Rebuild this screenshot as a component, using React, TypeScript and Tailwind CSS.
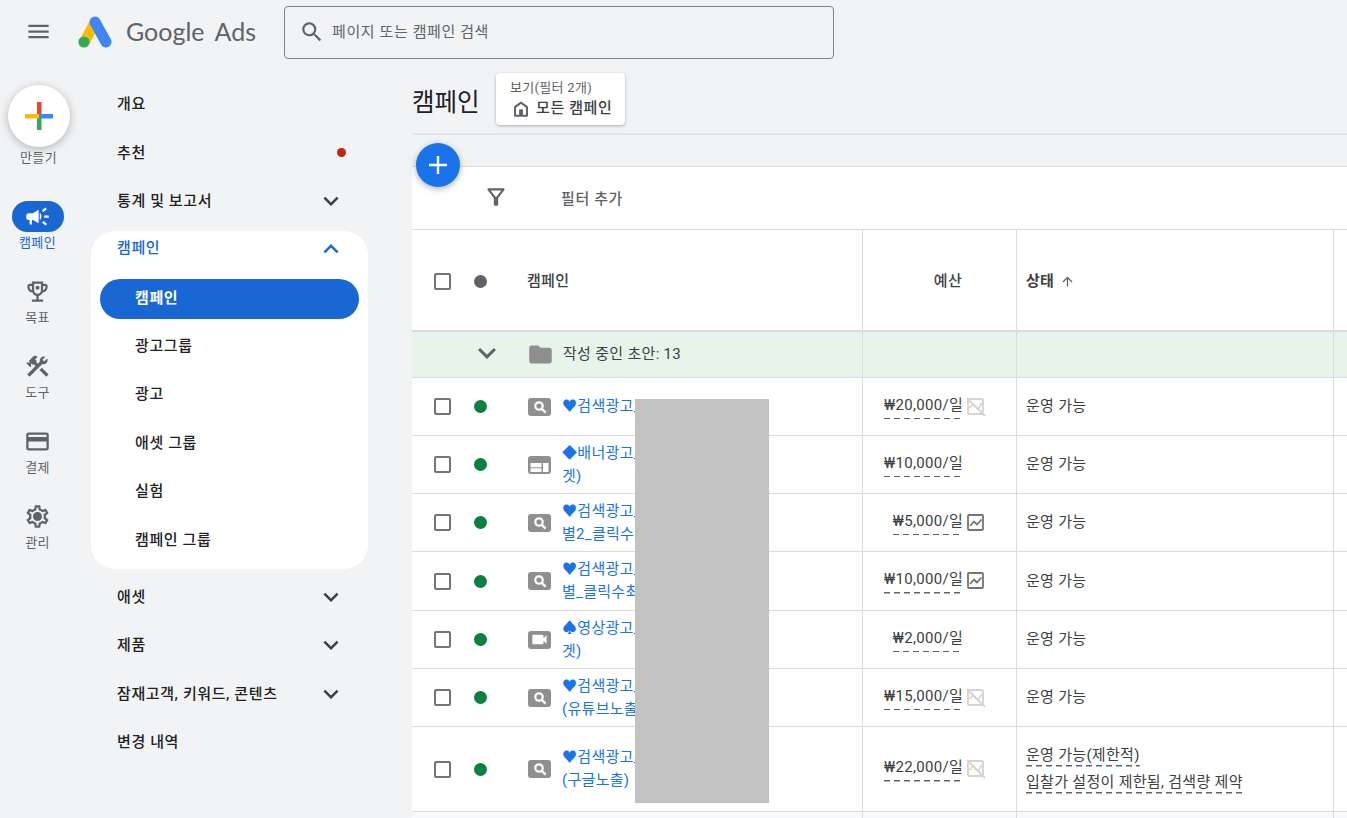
import type { ReactNode } from "react";
import {
  MdArrowUpward,
  MdCampaign,
  MdConstruction,
  MdCreditCard,
  MdExpandLess,
  MdExpandMore,
  MdFolder,
  MdMenu,
  MdOutlineFilterAlt,
  MdOutlineSettings,
  MdSearch,
  MdVideocam,
} from "react-icons/md";

const FONT = "font-['Roboto','Noto_Sans_CJK_KR',sans-serif]";
const NAV_TEXT = "text-[15px] tracking-[0.6px]";
const CELL_TEXT = "text-[15px] tracking-[0.3px]";
const RAIL_TEXT = "text-[13px] tracking-[0.3px]";

function AdsLogo() {
  return (
    <svg width="34" height="32" viewBox="0 0 34 32">
      <path d="M7 25 L16 8" stroke="#fbbc04" strokeWidth="10.5" strokeLinecap="butt" />
      <path d="M17 6 L28 26" stroke="#4285f4" strokeWidth="11" strokeLinecap="round" />
      <circle cx="6" cy="26" r="5.6" fill="#34a853" />
    </svg>
  );
}

function ColorPlus() {
  return (
    <svg width="28" height="28" viewBox="0 0 28 28">
      <rect x="12" y="0" width="4.5" height="14" fill="#ea4335" />
      <rect x="14" y="12" width="14" height="4.5" fill="#4285f4" />
      <rect x="12" y="14" width="4.5" height="14" fill="#34a853" />
      <rect x="0" y="12" width="14" height="4.5" fill="#fbbc04" />
    </svg>
  );
}

function TrophyIcon() {
  return (
    <svg width="27" height="27" viewBox="0 0 24 24" fill="currentColor">
      <path d="M19 5h-2V3H7v2H5c-1.1 0-2 .9-2 2v1c0 2.55 1.92 4.63 4.39 4.94.63 1.5 1.98 2.63 3.61 2.96V19H7v2h10v-2h-4v-3.1c1.63-.33 2.98-1.46 3.61-2.96C19.08 12.63 21 10.55 21 8V7c0-1.1-.9-2-2-2zM5 8V7h2v3.82C5.84 10.4 5 9.3 5 8zm7 6c-1.65 0-3-1.35-3-3V5h6v6c0 1.65-1.35 3-3 3zm7-6c0 1.3-.84 2.4-2 2.82V7h2v1z" />
      <circle cx="12" cy="8.6" r="1.8" />
    </svg>
  );
}

function GearIcon() {
  return (
    <span className="relative block h-[27px] w-[27px]">
      <MdOutlineSettings className="h-[27px] w-[27px]" />
      <span className="absolute left-[10px] top-[10px] h-[7px] w-[7px] rounded-full bg-[#5f6368]" />
    </span>
  );
}

function HomeIcon() {
  return (
    <svg width="18" height="18" viewBox="0 0 24 24" className="shrink-0">
      <path d="M12 3.5 4 9.5V21h16V9.5z" fill="none" stroke="#5f6368" strokeWidth="2.6" strokeLinejoin="round" />
      <rect x="9.5" y="12.5" width="5" height="8" fill="#5f6368" />
    </svg>
  );
}

function RailItem({ icon, label }: { icon: ReactNode; label: string }) {
  return (
    <div className="flex h-[75px] flex-col items-center">
      <div className="flex h-[31px] items-center justify-center text-[#5f6368]">{icon}</div>
      <span className={`mt-[3px] ${RAIL_TEXT} leading-4 text-[#5f6368]`}>{label}</span>
    </div>
  );
}

function NavItem({
  label,
  chevron,
  dot,
}: {
  label: string;
  chevron?: boolean;
  dot?: boolean;
}) {
  return (
    <div className={`flex h-[48.5px] items-center justify-between pl-[26px] pr-[22px] ${NAV_TEXT} font-medium text-[#202124]`}>
      <span>{label}</span>
      {chevron && <MdExpandMore className="h-[30px] w-[30px] text-[#3c4043]" />}
      {dot && <span className="h-[9px] w-[9px] rounded-full bg-[#c5221f]" />}
    </div>
  );
}

function SubItem({ label }: { label: string }) {
  return (
    <div className={`flex h-[48.5px] items-center pl-[44px] ${NAV_TEXT} font-medium text-[#202124]`}>
      {label}
    </div>
  );
}

function Checkbox() {
  return <span className="block h-[17px] w-[17px] rounded-[2px] border-2 border-[#757575] bg-white" />;
}

function TypeBox({ children }: { children: ReactNode }) {
  return (
    <span className="flex h-[18px] w-[23px] items-center justify-center rounded-[3px] bg-[#8f8f8f] text-white">
      {children}
    </span>
  );
}

function SearchType() {
  return (
    <TypeBox>
      <svg width="14" height="14" viewBox="0 0 14 14">
        <circle cx="6" cy="6" r="3.7" fill="none" stroke="#fff" strokeWidth="2.2" />
        <path d="M8.8 8.8 L12.6 12.6" stroke="#fff" strokeWidth="2.4" />
      </svg>
    </TypeBox>
  );
}

function DisplayType() {
  return (
    <svg width="23" height="18" viewBox="0 0 23 18">
      <rect x="0" y="0" width="23" height="18" rx="3" fill="#8f8f8f" />
      <rect x="2.5" y="7" width="11" height="4.3" fill="#fff" />
      <rect x="2.5" y="12.3" width="11" height="3.7" fill="#fff" />
      <rect x="15" y="7" width="5.5" height="9" fill="#fff" />
    </svg>
  );
}

function VideoType() {
  return (
    <TypeBox>
      <MdVideocam className="h-[19px] w-[19px]" />
    </TypeBox>
  );
}

function ChartIcon({ off }: { off?: boolean }) {
  const color = off ? "#d4d4d4" : "#757575";
  return (
    <svg width="20" height="20" viewBox="0 0 20 20" className="shrink-0">
      <rect x="2" y="2" width="15" height="15" rx="1" fill="none" stroke={color} strokeWidth="1.8" />
      {off ? (
        <>
          <path d="M3 11 L7 7.5 L12 12 L16 6" fill="none" stroke={color} strokeWidth="1.6" />
          <path d="M1 1 L19 19" stroke={color} strokeWidth="1.8" />
        </>
      ) : (
        <path d="M4 13 L8 8.5 L11 11.5 L15.5 6.5" fill="none" stroke={color} strokeWidth="1.8" />
      )}
    </svg>
  );
}

const dashed =
  "bg-[repeating-linear-gradient(90deg,#5f6368_0_6px,transparent_6px_10px)] bg-[length:100%_1.5px] bg-bottom bg-no-repeat pb-[3px]";

type Row = {
  type: ReactNode;
  lines: string[];
  budget: string;
  chart?: "on" | "off";
  height: string;
};

const rows: Row[] = [
  { type: <SearchType />, lines: ["♥검색광고_"], budget: "₩20,000/일", chart: "off", height: "h-[58px]" },
  { type: <DisplayType />, lines: ["◆배너광고_", "겟)"], budget: "₩10,000/일", height: "h-[58px]" },
  { type: <SearchType />, lines: ["♥검색광고_", "별2_클릭수최"], budget: "₩5,000/일", chart: "on", height: "h-[58px]" },
  { type: <SearchType />, lines: ["♥검색광고_", "별_클릭수최"], budget: "₩10,000/일", chart: "on", height: "h-[59px]" },
  { type: <VideoType />, lines: ["♠영상광고_", "겟)"], budget: "₩2,000/일", height: "h-[58px]" },
  { type: <SearchType />, lines: ["♥검색광고_", "(유튜브노출"], budget: "₩15,000/일", chart: "off", height: "h-[58px]" },
];

const gridCols = "grid grid-cols-[451px_154px_317px_1fr]";
const cellLine = "border-r border-[#dadce0]";

function NameCell({ type, lines }: { type: ReactNode; lines: string[] }) {
  return (
    <div className={`${cellLine} flex items-center overflow-hidden`}>
      <span className="ml-[22px]">
        <Checkbox />
      </span>
      <span className="ml-[23px] h-[13px] w-[13px] shrink-0 rounded-full bg-[#0b8043]" />
      <span className="ml-[41px] flex w-[23px] shrink-0 justify-center">{type}</span>
      <div className={`ml-[11px] whitespace-nowrap ${CELL_TEXT} leading-[23px] text-[#1a73e8]`}>
        {lines.map((l) => (
          <div key={l}>{l}</div>
        ))}
      </div>
    </div>
  );
}

function BudgetCell({ budget, chart }: { budget: string; chart?: "on" | "off" }) {
  return (
    <div className={`${cellLine} flex items-center pr-[30px] ${CELL_TEXT} text-[#3c4043]`}>
      <span className="ml-auto flex shrink-0 items-center justify-end gap-[3px]">
        <span className={`${dashed} whitespace-nowrap`}>{budget}</span>
        <span className="w-[20px]">{chart && <ChartIcon off={chart === "off"} />}</span>
      </span>
    </div>
  );
}

function CampaignRow({ row }: { row: Row }) {
  return (
    <div className={`${gridCols} ${row.height} border-b border-[#dadce0]`}>
      <NameCell type={row.type} lines={row.lines} />
      <BudgetCell budget={row.budget} chart={row.chart} />
      <div className={`${cellLine} flex items-center pl-[9px] ${CELL_TEXT} text-[#3c4043]`}>운영 가능</div>
      <div />
    </div>
  );
}

export default function App() {
  return (
    <div className={`${FONT} relative flex h-[818px] w-[1347px] flex-col overflow-hidden bg-[#f1f3f4]`}>
      {/* top bar */}
      <header className="flex h-[64px] shrink-0 items-center">
        <MdMenu className="ml-[25px] h-[27px] w-[27px] -translate-y-[1px] text-[#5f6368]" />
        <span className="ml-[26px]">
          <AdsLogo />
        </span>
        <span className="ml-[14px] w-[131px] whitespace-nowrap font-['Lato',sans-serif] text-[25px] text-[#5f6368]">
          Google<span className="ml-[10px]">Ads</span>
        </span>
        <div className="ml-[27px] flex h-[53px] w-[550px] items-center rounded border border-[#80868b] pl-[14px]">
          <MdSearch className="h-[26px] w-[26px] text-[#5f6368]" />
          <span className={`ml-[7px] ${NAV_TEXT} text-[#5f6368]`}>페이지 또는 캠페인 검색</span>
        </div>
      </header>

      <div className="flex min-h-0 flex-1">
        {/* icon rail */}
        <aside className="flex w-[77px] shrink-0 flex-col items-center">
          <div className="mt-[21px] flex h-[62px] w-[62px] items-center justify-center rounded-full bg-white shadow-[0_2px_8px_rgba(60,64,67,0.35)]">
            <ColorPlus />
          </div>
          <span className={`mt-[1px] ${RAIL_TEXT} leading-5 text-[#5f6368]`}>만들기</span>
          <div className="mt-[33px] flex h-[75px] -translate-x-[1px] flex-col items-center">
            <div className="flex h-[31px] w-[52px] items-center justify-center rounded-full bg-[#1967d2] text-white">
              <MdCampaign className="h-[27px] w-[27px]" />
            </div>
            <span className={`mt-[3px] ${RAIL_TEXT} leading-4 text-[#1967d2]`}>캠페인</span>
          </div>
          <div className="flex -translate-x-[1px] flex-col">
            <RailItem icon={<TrophyIcon />} label="목표" />
            <RailItem icon={<MdConstruction className="h-[27px] w-[27px]" />} label="도구" />
            <RailItem icon={<MdCreditCard className="h-[27px] w-[27px]" />} label="결제" />
            <RailItem icon={<GearIcon />} label="관리" />
          </div>
        </aside>

        {/* section nav */}
        <nav className="ml-[14px] w-[277px] shrink-0 pt-[16px]">
          <NavItem label="개요" />
          <NavItem label="추천" dot />
          <NavItem label="통계 및 보고서" chevron />
          <div className="mt-[5px] h-[338px] rounded-[24px] bg-white">
            <div className={`mb-[12px] flex h-[36px] items-center justify-between pl-[26px] pr-[22px] ${NAV_TEXT} font-medium text-[#1967d2]`}>
              <span>캠페인</span>
              <MdExpandLess className="h-[30px] w-[30px]" />
            </div>
            <div className={`mx-[9px] flex h-[40px] items-center rounded-full bg-[#1967d2] pl-[35px] ${NAV_TEXT} font-bold text-white`}>
              캠페인
            </div>
            <div className="pt-[3px]">
              <SubItem label="광고그룹" />
              <SubItem label="광고" />
              <SubItem label="애셋 그룹" />
              <SubItem label="실험" />
              <SubItem label="캠페인 그룹" />
            </div>
          </div>
          <div className="pt-[4px]">
            <NavItem label="애셋" chevron />
            <NavItem label="제품" chevron />
            <NavItem label="잠재고객, 키워드, 콘텐츠" chevron />
            <NavItem label="변경 내역" />
          </div>
        </nav>

        {/* main */}
        <main className="ml-[44px] min-w-0 flex-1">
          <div className="flex h-[71px] items-start border-b-2 border-[#e3e5e7]">
            <h1 className="mt-[21px] w-[84px] text-[24.5px] leading-9 text-[#202124]">캠페인</h1>
            <div className="mt-[9px] h-[52px] w-[129px] rounded-[4px] bg-white pl-[14px] pt-[6px] shadow-[0_1px_3px_rgba(60,64,67,0.4)]">
              <div className={`${RAIL_TEXT} leading-[17px] text-[#5f6368]`}>보기(필터 2개)</div>
              <div className={`mt-[1px] flex items-center gap-[6px] pl-[2px] ${NAV_TEXT} font-medium leading-[23px] text-[#3c4043]`}>
                <HomeIcon />
                모든 캠페인
              </div>
            </div>
          </div>

          <div className="relative mt-[31px] border-t border-[#dadce0] bg-white">
            <button className="absolute left-[4px] -top-[24px] flex h-[44px] w-[44px] items-center justify-center rounded-full bg-[#1a73e8] text-white shadow-[0_2px_6px_rgba(60,64,67,0.4)]">
              <svg width="20" height="20" viewBox="0 0 20 20">
                <path d="M10 1 V19 M1 10 H19" stroke="#fff" strokeWidth="2.4" />
              </svg>
            </button>

            <div className="flex h-[63px] items-center border-b border-[#dadce0]">
              <MdOutlineFilterAlt className="ml-[71px] h-[26px] w-[26px] -translate-y-[1px] text-[#5f6368]" />
              <span className={`ml-[52px] translate-y-[1px] ${NAV_TEXT} font-medium text-[#5f6368]`}>필터 추가</span>
            </div>

            <div className={`${gridCols} h-[102px] border-b-2 border-[#dadce0]`}>
              <div className={`${cellLine} flex items-center pt-[2px]`}>
                <span className="ml-[22px]">
                  <Checkbox />
                </span>
                <span className="ml-[23px] h-[13px] w-[13px] rounded-full bg-[#5f6368]" />
                <span className={`ml-[40px] ${CELL_TEXT} font-medium text-[#3c4043]`}>캠페인</span>
              </div>
              <div className={`${cellLine} flex items-center justify-end pr-[54px] pt-[2px] ${CELL_TEXT} font-medium text-[#3c4043]`}>
                예산
              </div>
              <div className={`${cellLine} flex items-center pl-[9px] pt-[2px] ${CELL_TEXT} font-bold text-[#3c4043]`}>
                상태
                <MdArrowUpward className="ml-[6px] h-[15px] w-[15px] text-[#5f6368]" />
              </div>
              <div />
            </div>

            <div className={`${gridCols} h-[46px] border-b border-[#dadce0] bg-[#e6f4ea]`}>
              <div className={`${cellLine} flex items-center`}>
                <MdExpandMore className="ml-[57px] h-[36px] w-[36px] -translate-y-[2px] text-[#5f6368]" />
                <MdFolder className="ml-[22px] h-[27px] w-[27px] text-[#8f8f8f]" />
                <span className={`ml-[9px] ${CELL_TEXT} text-[#3c4043]`}>작성 중인 초안: 13</span>
              </div>
              <div className={cellLine} />
              <div className={cellLine} />
              <div />
            </div>

            {rows.map((r, i) => (
              <CampaignRow key={i} row={r} />
            ))}

            <div className={`${gridCols} h-[85px] border-b border-[#dadce0]`}>
              <NameCell type={<SearchType />} lines={["♥검색광고_", "(구글노출)"]} />
              <BudgetCell budget="₩22,000/일" chart="off" />
              <div className={`${cellLine} flex flex-col justify-center gap-[7px] pb-[2px] pl-[9px] ${CELL_TEXT} leading-5 text-[#3c4043]`}>
                <div>
                  <span className={dashed}>운영 가능(제한적)</span>
                </div>
                <div>
                  <span className={dashed}>입찰가 설정이 제한됨, 검색량 제약</span>
                </div>
              </div>
              <div />
            </div>

            <div className={`${gridCols} h-[10px] bg-[#f8f9fa]`}>
              <div className={cellLine} />
              <div className={cellLine} />
              <div className={cellLine} />
              <div />
            </div>
          </div>
        </main>
      </div>

      {/* redaction block over the campaign names */}
      <div className="absolute left-[635px] top-[399px] h-[404px] w-[134px] bg-[#c2c2c2]" />
    </div>
  );
}
